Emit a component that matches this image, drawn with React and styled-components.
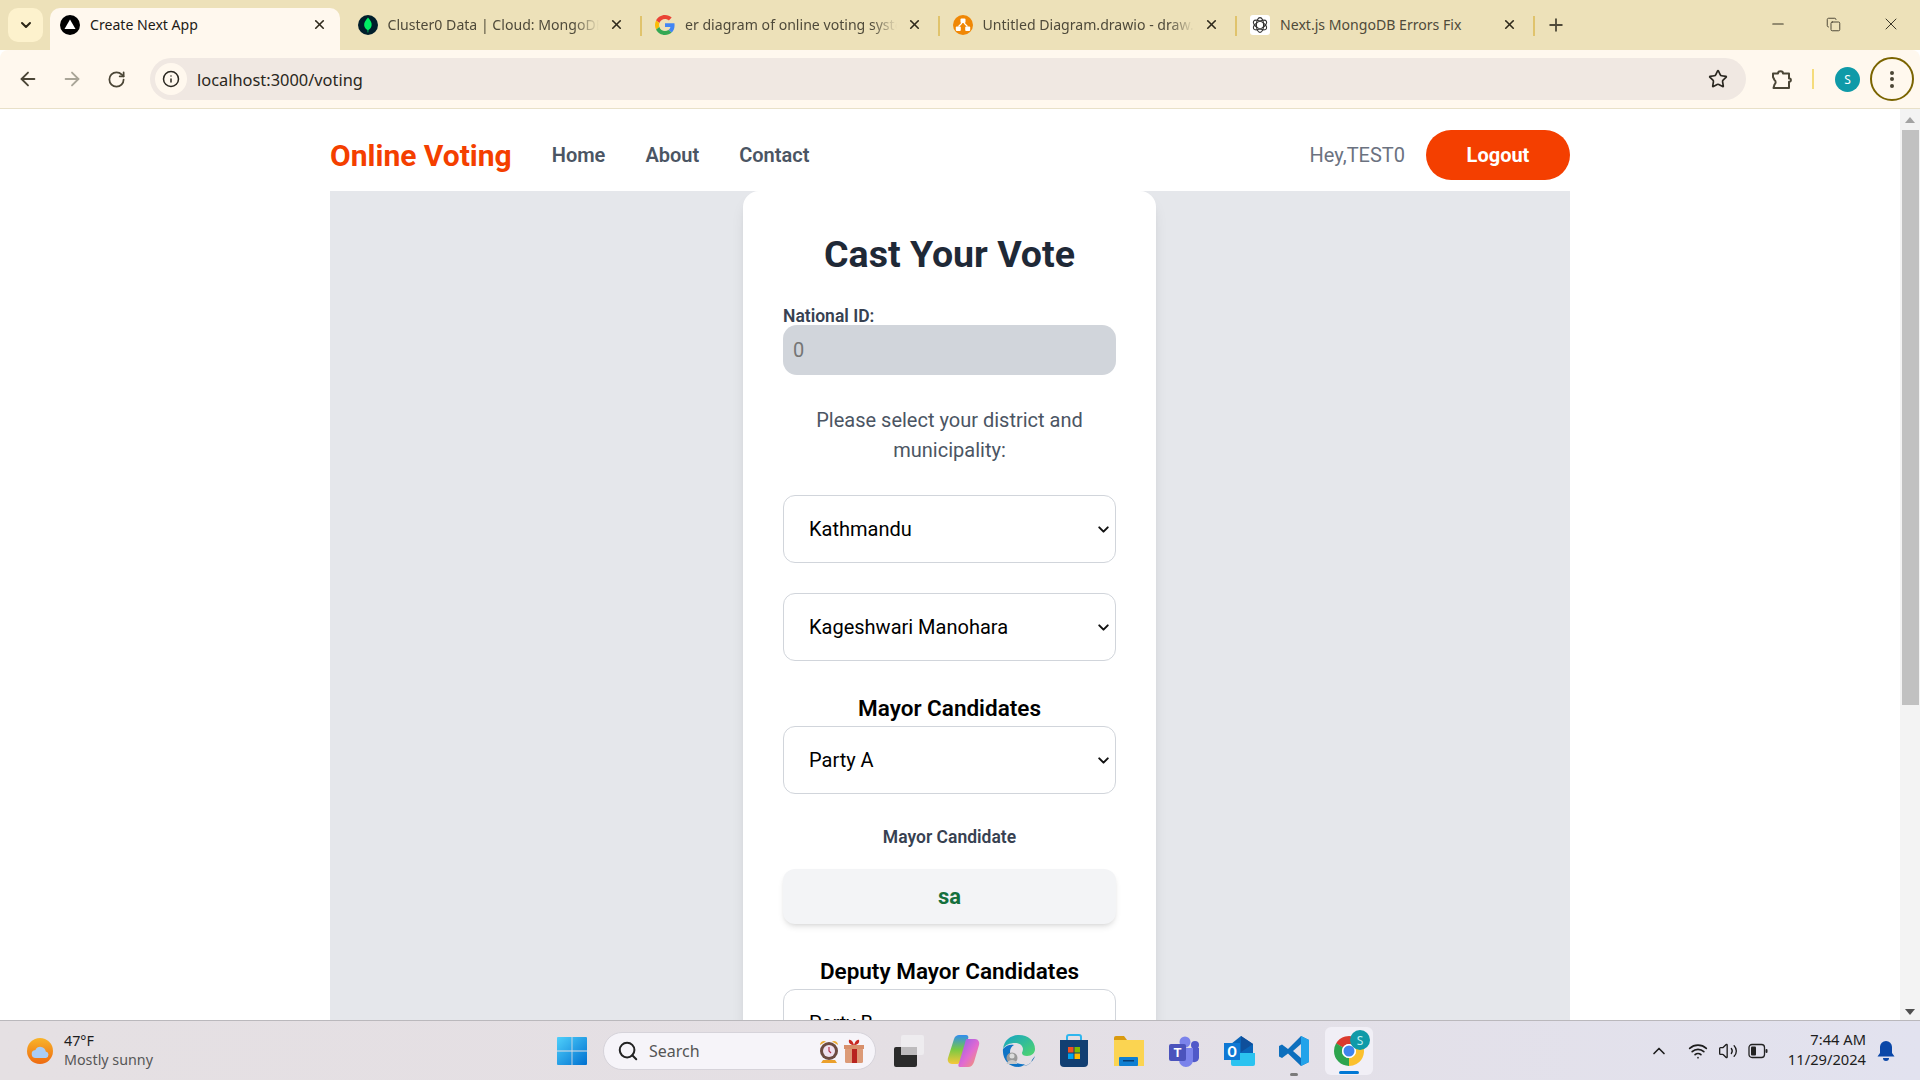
import styled, { createGlobalStyle } from "styled-components";
import {
  ArrowLeft,
  ArrowRight,
  RotateCw,
  Info,
  Star,
  Plus,
  Minus,
  Copy,
  X,
  ChevronDown,
  ChevronUp,
  Search,
  Wifi,
  Volume2,
} from "lucide-react";

const GlobalStyle = createGlobalStyle`
  html, body {
    margin: 0;
    padding: 0;
    overflow: hidden;
  }
  * {
    box-sizing: border-box;
  }
  body {
    font-family: Roboto, "Liberation Sans", sans-serif;
  }
`;

const Screen = styled.div`
  width: 1920px;
  height: 1080px;
  display: flex;
  flex-direction: column;
  overflow: hidden;
  background: #fff;
`;

/* browser chrome */
const TabStrip = styled.div`
  height: 50px;
  flex: none;
  display: flex;
  align-items: flex-end;
  padding-left: 8px;
  background: #ede1b9;
  font-family: "Noto Sans", sans-serif;
`;

const TabMenu = styled.div`
  width: 35px;
  height: 34px;
  margin: 0 3px 8px 0;
  border-radius: 10px;
  background: #fdf2cd;
  display: flex;
  align-items: center;
  justify-content: center;
  color: #2b2616;
`;

const Tab = styled.div`
  width: 297.5px;
  height: 42px;
  padding: 0 4px;
  flex: none;
  display: flex;
  position: relative;

  &::after {
    content: "";
    display: ${(p) => (p.$sep ? "block" : "none")};
    position: absolute;
    right: -1px;
    top: 8px;
    height: 20px;
    width: 2px;
    background: #e0c36c;
  }
`;

const TabBody = styled.div`
  flex: 1;
  min-width: 0;
  display: flex;
  align-items: center;
  padding: 0 13px 9px 10px;
  border-radius: 10px 10px 0 0;
  background: ${(p) => (p.$active ? "#fff8ee" : "transparent")};
  color: ${(p) => (p.$active ? "#1d1b16" : "#4f4a3a")};
`;

const Fav = styled.svg`
  width: 20px;
  height: 20px;
  flex: none;
  margin-right: 10px;
`;

const TabTitle = styled.div`
  flex: 1;
  min-width: 0;
  font-size: 14.1px;
  white-space: nowrap;
  overflow: hidden;
  mask-image: ${(p) =>
    p.$fade ? "linear-gradient(to right, #000 88%, transparent 100%)" : "none"};
`;

const TabClose = styled(X)`
  width: 15px;
  height: 15px;
  flex: none;
  margin-left: 10px;
  stroke-width: 2.6;
  color: #2f2a1c;
`;

const NewTab = styled.div`
  width: 44px;
  height: 42px;
  padding-bottom: 8px;
  display: flex;
  align-items: center;
  justify-content: center;
  color: #4f4a3a;
`;

const WindowControls = styled.div`
  margin-left: auto;
  height: 50px;
  display: flex;
  align-items: center;
  padding-right: 1px;
  color: #3a3628;
`;

const WindowButton = styled.div`
  width: ${(p) => p.$w}px;
  display: flex;
  justify-content: center;
  padding-bottom: 2px;
`;

const Toolbar = styled.div`
  height: 59px;
  flex: none;
  display: flex;
  align-items: center;
  padding: 0 6px;
  background: #fff8ee;
  border-bottom: 1px solid #e8e0c8;
  border-radius: 8px 8px 0 0;
`;

const NavIcon = styled.div`
  width: 44px;
  display: flex;
  justify-content: center;
  color: ${(p) => (p.$off ? "#a9a597" : "#4b4636")};
`;

const UrlBar = styled.div`
  flex: 1;
  height: 42px;
  margin-left: 12px;
  border-radius: 21px;
  background: #f0e8e2;
  display: flex;
  align-items: center;
  padding: 0 18px 0 5px;
  font-family: "Noto Sans", sans-serif;
  font-size: 16.4px;
  color: #2a2720;
`;

const InfoBubble = styled.div`
  width: 32px;
  height: 32px;
  border-radius: 50%;
  background: #fff8ee;
  display: flex;
  align-items: center;
  justify-content: center;
  margin-right: 10px;
  color: #2a2720;
`;

const UrlText = styled.span`
  flex: 1;
  padding-top: 1px;
`;

const ToolGroup = styled.div`
  margin-left: 23px;
  display: flex;
  align-items: center;
  color: #4b4636;
`;

const Divider = styled.div`
  width: 2px;
  height: 20px;
  margin: 0 21px 0 19px;
  background: #f5dc7c;
`;

const Avatar = styled.div`
  width: 25px;
  height: 25px;
  border-radius: 50%;
  background: #0f9aa8;
  color: #fff;
  font-size: 12px;
  display: flex;
  align-items: center;
  justify-content: center;
  font-family: "Noto Sans", sans-serif;
`;

const MenuRing = styled.div`
  width: 44px;
  height: 44px;
  margin-left: 10px;
  border-radius: 50%;
  border: 2.5px solid #7a6400;
  display: flex;
  flex-direction: column;
  gap: 2.5px;
  align-items: center;
  justify-content: center;
`;

const MenuDot = styled.i`
  width: 4px;
  height: 4px;
  border-radius: 50%;
  background: #4b4636;
`;

/* page */
const Viewport = styled.div`
  flex: 1;
  min-height: 0;
  display: flex;
`;

const Page = styled.div`
  flex: 1;
  min-width: 0;
  overflow: hidden;
`;

const Container = styled.div`
  width: 1240px;
  margin: 0 auto;
`;

const Nav = styled.nav`
  height: 82px;
  padding-top: 10px;
  display: flex;
  align-items: center;
`;

const Logo = styled.div`
  font-size: 30px;
  font-weight: 700;
  color: #f43f00;
  margin-right: 40px;
`;

const NavLink = styled.a`
  font-size: 20px;
  font-weight: 600;
  color: #4b5563;
  margin-right: 40px;
`;

const Greeting = styled.span`
  margin-left: auto;
  font-size: 20px;
  color: #6b7280;
`;

const LogoutButton = styled.button`
  width: 144px;
  height: 50px;
  margin-left: 21px;
  border: none;
  border-radius: 25px;
  background: #f43f00;
  color: #fff;
  font-family: inherit;
  font-size: 20px;
  font-weight: 700;
`;

const Main = styled.main`
  background: #e5e7eb;
  display: flex;
  justify-content: center;
  padding-right: 1px;
`;

const Card = styled.div`
  width: 413px;
  padding: 40px;
  background: #fff;
  border-radius: 16px;
  box-shadow: 0 10px 15px -3px rgba(0, 0, 0, 0.1), 0 4px 6px -4px rgba(0, 0, 0, 0.1);
`;

const Title = styled.h1`
  margin: 0 0 30px;
  font-size: 37.5px;
  line-height: 46px;
  font-weight: 700;
  text-align: center;
  color: #1f2937;
`;

const Label = styled.label`
  display: block;
  font-size: 17.5px;
  line-height: 18px;
  font-weight: 600;
  color: #374151;
`;

const IdInput = styled.input`
  display: block;
  width: 100%;
  height: 50px;
  padding: 0 10px;
  border: none;
  border-radius: 14px;
  background: #d1d5db;
  font-family: inherit;
  font-size: 20px;
  color: #6b7280;
`;

const Hint = styled.p`
  margin: 30px 0 30px;
  font-size: 20px;
  line-height: 30px;
  text-align: center;
  color: #4b5563;
`;

const SelectWrap = styled.div`
  position: relative;
  margin-bottom: ${(p) => p.$mb || 0}px;
`;

const Select = styled.select`
  display: block;
  width: 100%;
  height: 68px;
  padding: 0 20px 0 25px;
  appearance: none;
  border: 1px solid #d1d5db;
  border-radius: 12px;
  background: #fff;
  font-family: inherit;
  font-size: 20px;
  color: #000;
`;

const SelectArrow = styled(ChevronDown)`
  position: absolute;
  right: 4px;
  top: 50%;
  width: 17px;
  height: 17px;
  margin-top: -8px;
  stroke-width: 2.8;
  color: #111;
  pointer-events: none;
`;

const SectionHeading = styled.h2`
  margin: 0 0 2px;
  padding-top: 1px;
  font-size: 22.5px;
  line-height: 32px;
  font-weight: 600;
  text-align: center;
  color: #000;
`;

const CandidateLabel = styled.div`
  margin: 31px 0 20px;
  font-size: 17.5px;
  line-height: 24px;
  font-weight: 600;
  text-align: center;
  color: #374151;
`;

const CandidateBox = styled.div`
  height: 55px;
  margin-bottom: 30px;
  border-radius: 12px;
  background: #f3f4f6;
  box-shadow: 0 4px 6px -1px rgba(0, 0, 0, 0.1), 0 2px 4px -2px rgba(0, 0, 0, 0.1);
  display: flex;
  align-items: center;
  justify-content: center;
  font-size: 22px;
  font-weight: 700;
  color: #15703d;
`;

const Scrollbar = styled.div`
  width: 20px;
  flex: none;
  background: #f3f3f3;
  display: flex;
  flex-direction: column;
  align-items: center;
`;

const ScrollUp = styled.div`
  margin-top: 8px;
  border-left: 5px solid transparent;
  border-right: 5px solid transparent;
  border-bottom: 6px solid #a3a3a3;
`;

const ScrollThumb = styled.div`
  width: 17px;
  height: 575px;
  margin-top: 7px;
  background: #c1c1c1;
`;

const ScrollDown = styled.div`
  margin-top: auto;
  margin-bottom: 5px;
  border-left: 5px solid transparent;
  border-right: 5px solid transparent;
  border-top: 6px solid #505050;
`;

/* taskbar */
const Taskbar = styled.footer`
  height: 60px;
  flex: none;
  display: flex;
  align-items: center;
  border-top: 1px solid #bab8bc;
  background: linear-gradient(90deg, #e5e0e3 0%, #e4dfe4 50%, #e2e2ef 100%);
  font-family: "Noto Sans", sans-serif;
  color: #1d1d1d;
`;

const Weather = styled.div`
  width: 544px;
  flex: none;
  padding-left: 26px;
  display: flex;
  align-items: center;
  gap: 10px;
`;

const WeatherText = styled.div`
  font-size: 14.3px;
  line-height: 19px;
  padding-bottom: 1px;
`;

const WeatherSub = styled.div`
  color: #565656;
`;

const TaskSlot = styled.div`
  width: 55px;
  height: 48px;
  flex: none;
  display: flex;
  align-items: center;
  justify-content: center;
  position: relative;
  &::after {
    content: "";
    display: ${(p) => (p.$mark ? "block" : "none")};
    position: absolute;
    bottom: -1px;
    left: 50%;
    transform: translateX(-50%);
    height: 3px;
    border-radius: 2px;
    width: 8px;
    background: #7a7a7a;
  }
`;

const ChromeTile = styled.div`
  width: 48px;
  height: 48px;
  flex: none;
  margin-left: 4px;
  position: relative;
  border-radius: 6px;
  background: #f1eff6;
  &::after {
    content: "";
    position: absolute;
    bottom: 1px;
    left: 14px;
    width: 20px;
    height: 3px;
    border-radius: 2px;
    background: #0078d4;
  }
`;

const SearchPill = styled.div`
  width: 273px;
  height: 38px;
  margin: 0 5px 0 4px;
  flex: none;
  display: flex;
  align-items: center;
  padding: 0 11px 0 13px;
  border-radius: 19px;
  background: #f6f4f9;
  border: 1px solid #d6d3da;
  font-size: 16px;
  color: #555;
`;

const SearchLabel = styled.span`
  flex: 1;
  margin-left: 10px;
`;

const GiftSlot = styled.span`
  display: flex;
  margin-left: 5px;
`;

const Tray = styled.div`
  margin-left: auto;
  padding-right: 25px;
  display: flex;
  align-items: center;
`;

const Caret = styled(ChevronUp)`
  margin-right: 19px;
`;

const TrayIcons = styled.div`
  display: flex;
  align-items: center;
  gap: 10px;
  margin-right: 20px;
`;

const Clock = styled.div`
  font-size: 14.7px;
  line-height: 20px;
  text-align: right;
  margin-right: 11px;
  padding-bottom: 4px;
`;

function Favicon({ kind }) {
  if (kind === "next")
    return (
      <Fav viewBox="0 0 20 20">
        <circle cx="10" cy="10" r="10" fill="#000" />
        <path d="M10 4.500l5.500 9.500h-11z" fill="#fff" />
      </Fav>
    );
  if (kind === "mongo")
    return (
      <Fav viewBox="0 0 20 20">
        <circle cx="10" cy="10" r="10" fill="#001e2b" />
        <path d="M10 2.500c2.800 3 4 5.400 3.600 8-.3 2.200-1.700 3.700-3.200 4.600l-.2 2.400h-.5l-.2-2.400c-1.600-1-3-2.500-3.300-4.600-.3-2.600 1-5 3.800-8z" fill="#00ed64" />
      </Fav>
    );
  if (kind === "google")
    return (
      <Fav viewBox="0 0 48 48">
        <path fill="#EA4335" d="M24 9.500c3.540 0 6.710 1.220 9.210 3.600l6.850-6.850C35.900 2.380 30.470 0 24 0 14.620 0 6.510 5.380 2.560 13.220l7.980 6.190C12.430 13.720 17.740 9.500 24 9.500z" />
        <path fill="#4285F4" d="M46.980 24.550c0-1.570-.15-3.090-.38-4.550H24v9.020h12.940c-.58 2.960-2.260 5.480-4.780 7.180l7.730 6c4.510-4.180 7.090-10.360 7.090-17.650z" />
        <path fill="#FBBC05" d="M10.530 28.590c-.48-1.450-.76-2.990-.76-4.590s.27-3.140.76-4.590l-7.980-6.190C.92 16.460 0 20.120 0 24c0 3.880.92 7.540 2.560 10.780l7.970-6.190z" />
        <path fill="#34A853" d="M24 48c6.480 0 11.930-2.130 15.890-5.810l-7.730-6c-2.150 1.450-4.920 2.300-8.160 2.300-6.260 0-11.570-4.220-13.470-9.910l-7.980 6.190C6.510 42.620 14.620 48 24 48z" />
      </Fav>
    );
  if (kind === "drawio")
    return (
      <Fav viewBox="0 0 20 20">
        <circle cx="10" cy="10" r="10" fill="#f08705" />
        <rect x="7.500" y="3.500" width="5" height="4.500" rx="1" fill="#fff" />
        <rect x="2.800" y="11.500" width="5" height="4.500" rx="1" fill="#fff" />
        <rect x="12.200" y="11.500" width="5" height="4.500" rx="1" fill="#fff" />
        <path d="M9 8l-3.500 3.500M11 8l3.500 3.500" stroke="#fff" strokeWidth="1.200" />
      </Fav>
    );
  return (
    <Fav viewBox="0 0 20 20">
      <rect width="20" height="20" rx="3" fill="#fff" />
      <g fill="none" stroke="#333" strokeWidth="1.100">
        <ellipse cx="10" cy="10" rx="3.600" ry="7.400" />
        <ellipse cx="10" cy="10" rx="3.600" ry="7.400" transform="rotate(60 10 10)" />
        <ellipse cx="10" cy="10" rx="3.600" ry="7.400" transform="rotate(120 10 10)" />
      </g>
    </Fav>
  );
}

function ExtensionIcon() {
  return (
    <svg width="24" height="24" viewBox="0 0 24 24" fill="none" stroke="currentColor" strokeWidth="2" strokeLinejoin="round">
      <path d="M4 6.500h5c0-3 5-3 5 0h6v5c2.500-.8 2.500 4 0 3.200V21H4.500l1-3.500c1.500-1 1.500-3.500 0-4.500L4 10z" />
    </svg>
  );
}

function WeatherIcon() {
  return (
    <svg width="28" height="28" viewBox="0 0 28 28">
      <defs>
        <linearGradient id="sun" x1="0" y1="0" x2="0" y2="1">
          <stop offset="0" stopColor="#f8b42a" />
          <stop offset="1" stopColor="#ee6a10" />
        </linearGradient>
      </defs>
      <circle cx="14" cy="14" r="13" fill="url(#sun)" />
      <path d="M10 21a4 4 0 0 1-.6-8 5.500 5.500 0 0 1 10.400 1.400A3.400 3.400 0 0 1 20 21z" fill="#a9cdf5" />
    </svg>
  );
}

function WindowsLogo() {
  return (
    <svg width="30" height="30" viewBox="0 0 30 30">
      <defs>
        <linearGradient id="win" x1="0" y1="0" x2="1" y2="1">
          <stop offset="0" stopColor="#4fd0fb" />
          <stop offset="1" stopColor="#0070d0" />
        </linearGradient>
      </defs>
      <path d="M1 1h13.600v13.600H0V2a1 1 0 0 1 1-1zM15.400 1H29a1 1 0 0 1 1 1v12.600H15.400zM0 15.400h14.600V29H1a1 1 0 0 1-1-1zM15.400 15.400H30V28a1 1 0 0 1-1 1H15.400z" fill="url(#win)" />
    </svg>
  );
}

function AlarmClock() {
  return (
    <svg width="20" height="26" viewBox="0 0 20 26">
      <path d="M4 22h12l2 3H2z" fill="#eba02c" />
      <path d="M1 7a4 4 0 0 1 6-3.500zM19 7a4 4 0 0 0-6-3.500z" fill="#eaa92f" />
      <circle cx="10" cy="13" r="9" fill="#6d4c41" />
      <circle cx="10" cy="13" r="6" fill="#efe1ee" />
      <path d="M10 9v4l2 2" stroke="#b3344a" strokeWidth="1.200" fill="none" />
    </svg>
  );
}

function Gift() {
  return (
    <svg width="20" height="26" viewBox="0 0 20 26">
      <rect x="1" y="10" width="18" height="15" rx="1.500" fill="#dc9a77" />
      <rect x="8" y="7" width="5" height="18" fill="#b8231f" />
      <rect x="0" y="7" width="20" height="4" fill="#d88f6b" />
      <path d="M10 7C7 7 4 5 5 2c2-1 4 2 5 5zM10 7c3 0 6-2 5-5-2-1-4 2-5 5z" fill="#c8281f" />
    </svg>
  );
}

function TaskView() {
  return (
    <svg width="32" height="34" viewBox="0 0 32 34">
      <rect x="1" y="13" width="23" height="20" rx="2" fill="#2b2b2b" />
      <rect x="8" y="1" width="23" height="20" rx="2" fill="#efedf0" opacity="0.92" />
      <rect x="8" y="13" width="16" height="8" fill="#bdbbbd" />
    </svg>
  );
}

function Copilot() {
  return (
    <svg width="34" height="34" viewBox="0 0 34 34">
      <defs>
        <linearGradient id="cpA" x1="0" y1="0" x2="0" y2="1">
          <stop offset="0" stopColor="#2f8df0" />
          <stop offset="0.500" stopColor="#7ac943" />
          <stop offset="1" stopColor="#f6c83a" />
        </linearGradient>
        <linearGradient id="cpB" x1="0" y1="0" x2="1" y2="1">
          <stop offset="0" stopColor="#8a5cf0" />
          <stop offset="0.550" stopColor="#e26bd0" />
          <stop offset="1" stopColor="#f4a05a" />
        </linearGradient>
      </defs>
      <path d="M12 1h7c2 0 3 2 2 4l-7 22c-1 2-2 3-4 3H5c-3 0-5-3-4-6l6-19c1-3 3-4 5-4z" fill="url(#cpA)" />
      <path d="M20 5h8c3 0 5 3 4 6l-5 17c-1 3-3 5-6 5h-8c-2 0-2-2-1-4l6-20c.4-2 1-4 2-4z" fill="url(#cpB)" />
    </svg>
  );
}

function Edge() {
  return (
    <svg width="34" height="34" viewBox="0 0 34 34">
      <defs>
        <linearGradient id="edgeA" x1="0" y1="0" x2="1" y2="1">
          <stop offset="0" stopColor="#14a3c7" />
          <stop offset="1" stopColor="#52d66a" />
        </linearGradient>
      </defs>
      <path d="M1 15C2 6 9 1 17 1c9 0 16 6 16 14 0 4-3 7-8 7-3 0-5-1-5-3 0-1 1-2 1-4 0-3-3-6-8-6C8 9 3 11 1 15z" fill="url(#edgeA)" />
      <path d="M1 15c3-4 8-5 11-4-4 2-5 7-3 12 2 5 8 8 14 7-2 2-4 3-7 3C7 33 0 25 1 15z" fill="#0f74c6" />
      <path d="M33 22c-2 6-7 10-13 10 5 0 9-2 10-6 1-1 2-3 3-4z" fill="#1269b0" />
      <circle cx="10" cy="24" r="5.500" fill="#9a9a9a" />
      <circle cx="10" cy="22" r="2.500" fill="#dcdcdc" />
      <path d="M4.500 30c1-3 3-4 5.500-4s4.500 1 5.500 4z" fill="#c8c8c8" />
    </svg>
  );
}

function Store() {
  return (
    <svg width="30" height="34" viewBox="0 0 30 34">
      <path d="M8 6V3a2 2 0 0 1 2-2h10a2 2 0 0 1 2 2v3" fill="none" stroke="#2fb6ee" strokeWidth="2" />
      <path d="M1 6h28v23a4 4 0 0 1-4 4H5a4 4 0 0 1-4-4z" fill="#123f72" />
      <rect x="9" y="13" width="5.500" height="5.500" fill="#f25022" />
      <rect x="15.500" y="13" width="5.500" height="5.500" fill="#7fba00" />
      <rect x="9" y="19.500" width="5.500" height="5.500" fill="#00a4ef" />
      <rect x="15.500" y="19.500" width="5.500" height="5.500" fill="#ffb900" />
    </svg>
  );
}

function Explorer() {
  return (
    <svg width="30" height="32" viewBox="0 0 30 32">
      <path d="M0 3a2 2 0 0 1 2-2h8l3 4h-13z" fill="#d99a0f" />
      <path d="M0 5h30v26H0z" fill="#fbd451" />
      <rect x="5" y="22" width="19" height="9" rx="1" fill="#0f7fd1" />
      <rect x="9" y="25" width="11" height="1.500" fill="#063f75" />
    </svg>
  );
}

function Teams() {
  return (
    <svg width="32" height="32" viewBox="0 0 32 32">
      <circle cx="27" cy="10" r="4" fill="#5059c9" />
      <circle cx="17" cy="7" r="5.500" fill="#7b83eb" />
      <path d="M22 13h9v10a5 5 0 0 1-9 2z" fill="#5059c9" />
      <path d="M9 13h16v12a7 7 0 0 1-14 0z" fill="#7b83eb" />
      <rect x="1" y="9" width="17" height="17" rx="2" fill="#4b53bc" />
      <text x="9.500" y="22" textAnchor="middle" fontFamily="Roboto, sans-serif" fontWeight="700" fontSize="13" fill="#fff">T</text>
    </svg>
  );
}

function Outlook() {
  return (
    <svg width="32" height="32" viewBox="0 0 32 32">
      <path d="M8 9l10-8 12 8v9H8z" fill="#0a64b8" />
      <path d="M18 1l12 8-12 8z" fill="#0f4f9b" />
      <path d="M8 18h24v11a2 2 0 0 1-2 2H10a2 2 0 0 1-2-2z" fill="#2bc3f0" />
      <rect x="1" y="8" width="16" height="17" fill="#0f78d4" />
      <text x="9" y="21.500" textAnchor="middle" fontFamily="Roboto, sans-serif" fontWeight="700" fontSize="14" fill="#fff">O</text>
    </svg>
  );
}

function VSCode() {
  return (
    <svg width="32" height="32" viewBox="0 0 32 32">
      <path d="M23 1l8 4v22l-8 4-13-12.500-6 4.500-3-1.500V11l3-1.500 6 4.500zM23 9l-8 7 8 7z" fill="#0d6fbd" />
      <path d="M23 1l8 4v22l-8 4z" fill="#23a3ea" />
    </svg>
  );
}

function Chrome() {
  return (
    <svg width="48" height="48" viewBox="0 0 48 48">
      <g fill="none" strokeWidth="8">
        <circle cx="24" cy="24" r="11" stroke="#db3a2e" strokeDasharray="23.100 46" transform="rotate(-150 24 24)" />
        <circle cx="24" cy="24" r="11" stroke="#fbc02d" strokeDasharray="23.100 46" transform="rotate(-30 24 24)" />
        <circle cx="24" cy="24" r="11" stroke="#2da44e" strokeDasharray="23.100 46" transform="rotate(90 24 24)" />
      </g>
      <circle cx="24" cy="24" r="7" fill="#fff" />
      <circle cx="24" cy="24" r="5.500" fill="#3f84ee" />
      <circle cx="35" cy="13" r="10" fill="#0f9aa8" />
      <text x="35" y="17.500" textAnchor="middle" fontFamily="Noto Sans, sans-serif" fontSize="12" fill="#bfeef2">S</text>
    </svg>
  );
}

function Battery() {
  return (
    <svg width="20" height="16" viewBox="0 0 20 16">
      <rect x="1" y="1.500" width="15.500" height="13" rx="3" fill="none" stroke="#222" strokeWidth="1.300" />
      <rect x="3" y="3.500" width="5" height="9" rx="1" fill="#222" />
      <rect x="17.500" y="6" width="2" height="4" rx="1" fill="#222" />
    </svg>
  );
}

function BellFilled() {
  return (
    <svg width="18" height="22" viewBox="0 0 18 22">
      <path d="M9 1a6 6 0 0 1 6 6v6l2.500 3.500H.5L3 13V7a6 6 0 0 1 6-6z" fill="#0a47a8" />
      <path d="M6 18h6a3 3 0 0 1-6 0z" fill="#0a47a8" />
    </svg>
  );
}

const tabs = [
  { kind: "next", title: "Create Next App", active: true },
  { kind: "mongo", title: "Cluster0 Data | Cloud: MongoDB Cloud", fade: true, sep: true },
  { kind: "google", title: "er diagram of online voting system", fade: true, sep: true },
  { kind: "drawio", title: "Untitled Diagram.drawio - draw.io", fade: true, sep: true },
  { kind: "openai", title: "Next.js MongoDB Errors Fix", sep: true },
];

function App() {
  return (
    <Screen>
      <GlobalStyle />
      <TabStrip>
        <TabMenu>
          <ChevronDown size={16} strokeWidth={3} />
        </TabMenu>
        {tabs.map((t) => (
          <Tab key={t.kind} $sep={t.sep}>
            <TabBody $active={t.active}>
              <Favicon kind={t.kind} />
              <TabTitle $fade={t.fade}>{t.title}</TabTitle>
              <TabClose />
            </TabBody>
          </Tab>
        ))}
        <NewTab>
          <Plus size={20} strokeWidth={2.2} />
        </NewTab>
        <WindowControls>
          <WindowButton $w={50}>
            <Minus size={18} strokeWidth={1.4} />
          </WindowButton>
          <WindowButton $w={60}>
            <Copy size={15} strokeWidth={1.4} />
          </WindowButton>
          <WindowButton $w={56}>
            <X size={20} strokeWidth={1.2} />
          </WindowButton>
        </WindowControls>
      </TabStrip>

      <Toolbar>
        <NavIcon>
          <ArrowLeft size={22} strokeWidth={2} />
        </NavIcon>
        <NavIcon $off>
          <ArrowRight size={22} strokeWidth={2} />
        </NavIcon>
        <NavIcon>
          <RotateCw size={19} strokeWidth={2.2} />
        </NavIcon>
        <UrlBar>
          <InfoBubble>
            <Info size={18} strokeWidth={2} />
          </InfoBubble>
          <UrlText>localhost:3000/voting</UrlText>
          <Star size={20} strokeWidth={2} />
        </UrlBar>
        <ToolGroup>
          <ExtensionIcon />
          <Divider />
          <Avatar>S</Avatar>
          <MenuRing>
            <MenuDot />
            <MenuDot />
            <MenuDot />
          </MenuRing>
        </ToolGroup>
      </Toolbar>

      <Viewport>
        <Page>
          <Container>
            <Nav>
              <Logo>Online Voting</Logo>
              <NavLink>Home</NavLink>
              <NavLink>About</NavLink>
              <NavLink>Contact</NavLink>
              <Greeting>Hey,TEST0</Greeting>
              <LogoutButton>Logout</LogoutButton>
            </Nav>
            <Main>
              <Card>
                <Title>Cast Your Vote</Title>
                <Label>National ID:</Label>
                <IdInput placeholder="0" disabled />
                <Hint>Please select your district and municipality:</Hint>
                <SelectWrap $mb={30}>
                  <Select defaultValue="Kathmandu">
                    <option>Kathmandu</option>
                  </Select>
                  <SelectArrow />
                </SelectWrap>
                <SelectWrap $mb={30}>
                  <Select defaultValue="Kageshwari Manohara">
                    <option>Kageshwari Manohara</option>
                  </Select>
                  <SelectArrow />
                </SelectWrap>
                <SectionHeading>Mayor Candidates</SectionHeading>
                <SelectWrap>
                  <Select defaultValue="Party A">
                    <option>Party A</option>
                  </Select>
                  <SelectArrow />
                </SelectWrap>
                <CandidateLabel>Mayor Candidate</CandidateLabel>
                <CandidateBox>sa</CandidateBox>
                <SectionHeading>Deputy Mayor Candidates</SectionHeading>
                <SelectWrap>
                  <Select defaultValue="Party B">
                    <option>Party B</option>
                  </Select>
                  <SelectArrow />
                </SelectWrap>
              </Card>
            </Main>
          </Container>
        </Page>
        <Scrollbar>
          <ScrollUp />
          <ScrollThumb />
          <ScrollDown />
        </Scrollbar>
      </Viewport>

      <Taskbar>
        <Weather>
          <WeatherIcon />
          <WeatherText>
            47°F
            <WeatherSub>Mostly sunny</WeatherSub>
          </WeatherText>
        </Weather>
        <TaskSlot>
          <WindowsLogo />
        </TaskSlot>
        <SearchPill>
          <Search size={22} strokeWidth={2.2} color="#222" />
          <SearchLabel>Search</SearchLabel>
          <AlarmClock />
          <GiftSlot>
            <Gift />
          </GiftSlot>
        </SearchPill>
        <TaskSlot>
          <TaskView />
        </TaskSlot>
        <TaskSlot>
          <Copilot />
        </TaskSlot>
        <TaskSlot>
          <Edge />
        </TaskSlot>
        <TaskSlot>
          <Store />
        </TaskSlot>
        <TaskSlot>
          <Explorer />
        </TaskSlot>
        <TaskSlot>
          <Teams />
        </TaskSlot>
        <TaskSlot>
          <Outlook />
        </TaskSlot>
        <TaskSlot $mark>
          <VSCode />
        </TaskSlot>
        <ChromeTile>
          <Chrome />
        </ChromeTile>
        <Tray>
          <Caret size={20} strokeWidth={2} />
          <TrayIcons>
            <Wifi size={20} strokeWidth={2} />
            <Volume2 size={20} strokeWidth={1.6} />
            <Battery />
          </TrayIcons>
          <Clock>
            7:44 AM
            <br />
            11/29/2024
          </Clock>
          <BellFilled />
        </Tray>
      </Taskbar>
    </Screen>
  );
}

export default App;
